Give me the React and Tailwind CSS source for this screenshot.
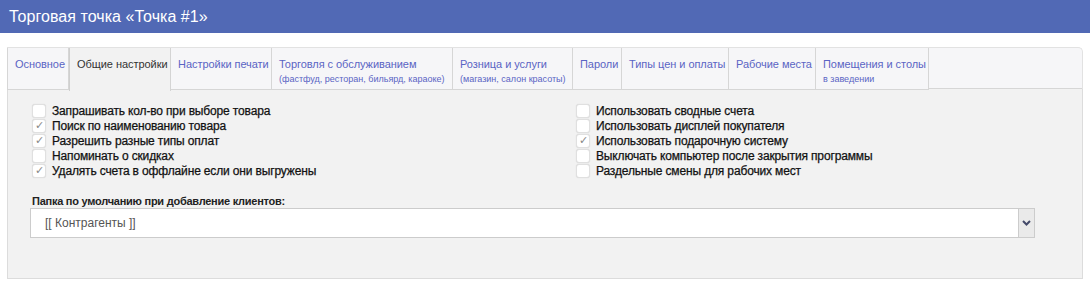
import React from 'react';

const tabs = [
  { title: 'Основное', w: 'w-[62px]' },
  { title: 'Общие настройки', w: 'w-[102px]', active: true },
  { title: 'Настройки печати', w: 'w-[101px]' },
  { title: 'Торговля с обслуживанием', sub: '(фастфуд, ресторан, бильярд, караоке)', w: 'w-[181px]' },
  { title: 'Розница и услуги', sub: '(магазин, салон красоты)', w: 'w-[120px]' },
  { title: 'Пароли', w: 'w-[49px]' },
  { title: 'Типы цен и оплаты', w: 'w-[107px]' },
  { title: 'Рабочие места', w: 'w-[87px]' },
  { title: 'Помещения и столы', sub: 'в заведении', w: 'w-[113px]' },
];

const leftOptions = [
  { label: 'Запрашивать кол-во при выборе товара', checked: false },
  { label: 'Поиск по наименованию товара', checked: true },
  { label: 'Разрешить разные типы оплат', checked: true },
  { label: 'Напоминать о скидках', checked: false },
  { label: 'Удалять счета в оффлайне если они выгружены', checked: true },
];

const rightOptions = [
  { label: 'Использовать сводные счета', checked: false },
  { label: 'Использовать дисплей покупателя', checked: false },
  { label: 'Использовать подарочную систему', checked: true },
  { label: 'Выключать компьютер после закрытия программы', checked: false },
  { label: 'Раздельные смены для рабочих мест', checked: false },
];

const Check = ({ label, checked }) => (
  <label className="flex items-center h-[15px] gap-[6px]">
    <span className="w-[14px] h-[14px] shrink-0 rounded-[3px] bg-white border border-[#e0e0e0] shadow-[0_0_1px_rgba(0,0,0,0.15)] flex items-center justify-center text-[11px] leading-none text-[#888]">
      {checked ? '✓' : ''}
    </span>
    <span className="text-[12px] tracking-[-0.15px] text-[#111] [-webkit-text-stroke:0.25px_#111]">{label}</span>
  </label>
);

const App = () => {
  return (
    <div className="w-[1090px] h-[283px] bg-white overflow-hidden font-['Liberation_Sans',Arial,sans-serif]">
      <div className="h-[33px] bg-[#5169b5] flex items-center px-[9px]">
        <h1 className="text-white text-[16px] tracking-[0.05px]">Торговая точка «Точка #1»</h1>
      </div>

      <div className="ml-[7px] mt-[14px] w-[1076px]">
        <div className="flex h-[42px] bg-[#f6f6f8] border-t border-r border-[#e2e2e2] rounded-tr-[5px]">
          {tabs.map((t) =>
            t.active ? (
              <div
                key={t.title}
                className={`${t.w} shrink-0 h-[43px] bg-[#f2f2f2] border-l border-[#cfcfcf] border-r border-r-[#d4d4d4] pl-[7px] pt-[9px] text-[11px] leading-[14px] tracking-[-0.05px] text-[#333] whitespace-nowrap relative z-10`}
              >
                {t.title}
              </div>
            ) : (
              <div
                key={t.title}
                className={`${t.w} shrink-0 h-[42px] border-r border-[#d6d6d6] border-b pl-[7px] pt-[9px] text-[#5a64c4] first:border-l`}
              >
                <div className="text-[11px] leading-[14px] tracking-[-0.05px] whitespace-nowrap">{t.title}</div>
                {t.sub && <div className="text-[9px] leading-[12px] mt-[2px] whitespace-nowrap">{t.sub}</div>}
              </div>
            )
          )}
          <div className="flex-1 border-b border-[#d6d6d6]" />
        </div>

        <div className="h-[190px] bg-[#f2f2f2] border border-t-0 border-[#dcdcdc] pl-[24px] pt-[14px]">
          <div className="flex">
            <div className="w-[544px] flex flex-col">
              {leftOptions.map((o) => (
                <Check key={o.label} {...o} />
              ))}
            </div>
            <div className="flex flex-col">
              {rightOptions.map((o) => (
                <Check key={o.label} {...o} />
              ))}
            </div>
          </div>

          <div className="mt-[16px] text-[11px] leading-[14px] text-[#222] font-bold tracking-[-0.25px]">Папка по умолчанию при добавление клиентов:</div>
          <div className="w-[1005px] h-[30px] -ml-[2px] flex bg-white border border-[#cccccc]">
            <div className="flex-1 flex items-center pl-[14px] text-[12px] text-[#555]">[[ Контрагенты ]]</div>
            <div className="w-[16px] border-l border-[#cccccc] bg-[#eaeaea] flex items-center justify-center">
              <svg width="9" height="6" viewBox="0 0 9 6">
                <path d="M1 1 L4.5 4.5 L8 1" fill="none" stroke="#444a6a" strokeWidth="2" />
              </svg>
            </div>
          </div>
        </div>
      </div>
    </div>
  );
};

export default App;
